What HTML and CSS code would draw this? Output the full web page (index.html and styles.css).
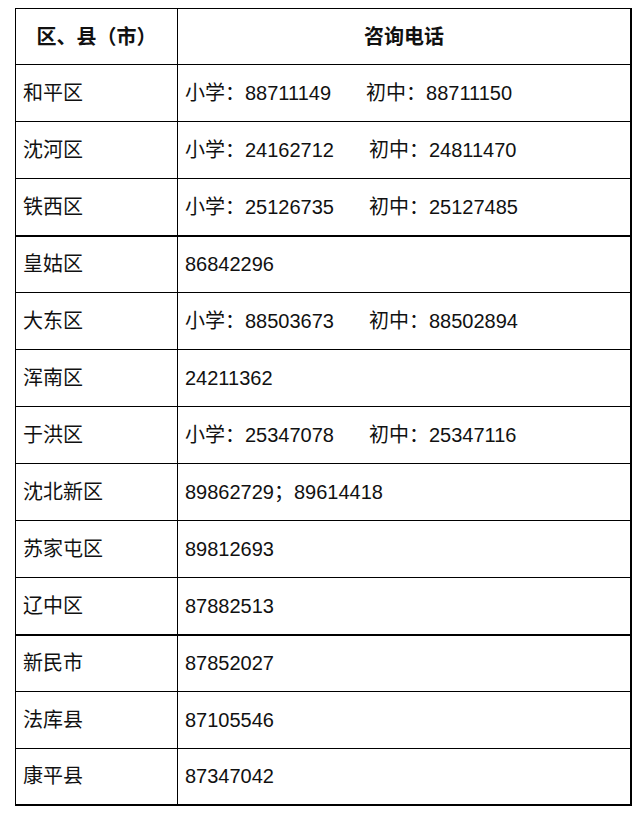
FILE: index.html
```html
<!DOCTYPE html>
<html lang="zh-CN">
<head>
<meta charset="utf-8">
<link rel="stylesheet" href="styles.css">
</head>
<body>
<table class="tbl">
  <tr class="head"><th class="c1">区、县（市）</th><th class="c2">咨询电话</th></tr>
  <tr><td class="c1">和平区</td><td class="c2">小学：88711149<span class="gap">初中：88711150</span></td></tr>
  <tr><td class="c1">沈河区</td><td class="c2">小学：24162712<span class="gap">初中：24811470</span></td></tr>
  <tr class="thick"><td class="c1">铁西区</td><td class="c2">小学：25126735<span class="gap">初中：25127485</span></td></tr>
  <tr><td class="c1">皇姑区</td><td class="c2">86842296</td></tr>
  <tr><td class="c1">大东区</td><td class="c2">小学：88503673<span class="gap">初中：88502894</span></td></tr>
  <tr><td class="c1">浑南区</td><td class="c2">24211362</td></tr>
  <tr><td class="c1">于洪区</td><td class="c2">小学：25347078<span class="gap">初中：25347116</span></td></tr>
  <tr><td class="c1">沈北新区</td><td class="c2">89862729；89614418</td></tr>
  <tr><td class="c1">苏家屯区</td><td class="c2">89812693</td></tr>
  <tr class="thick"><td class="c1">辽中区</td><td class="c2">87882513</td></tr>
  <tr><td class="c1">新民市</td><td class="c2">87852027</td></tr>
  <tr><td class="c1">法库县</td><td class="c2">87105546</td></tr>
  <tr class="last"><td class="c1">康平县</td><td class="c2">87347042</td></tr>
</table>
</body>
</html>
```
FILE: styles.css
```css
html, body {
  margin: 0;
  padding: 0;
  background: #fff;
}
body {
  padding: 8px 0 0 15px;
  font-family: "Liberation Sans", "Noto Sans CJK SC", sans-serif;
  color: #111;
}
.tbl {
  border-collapse: collapse;
  width: 617px;
  table-layout: fixed;
}
.tbl tr {
  height: 57px;
}
.tbl tr.head,
.tbl tr.last {
  height: 56px;
}
.tbl th, .tbl td {
  border: 1px solid #000;
  padding: 0;
  vertical-align: middle;
  font-size: 20px;
  line-height: 24px;
  white-space: nowrap;
}
.tbl th {
  font-weight: bold;
  text-align: center;
}
.tbl .c1 {
  width: 161px;
}
.tbl td.c1 {
  padding-left: 7px;
}
.tbl td.c2 {
  padding-left: 7px;
}
.tbl .c2 {
  border-right: 2px solid #000;
}
.tbl tr.thick td {
  border-bottom: 2px solid #000;
}
.tbl tr.last td {
  border-bottom: 2px solid #000;
}
.gap {
  margin-left: 35px;
}
```
